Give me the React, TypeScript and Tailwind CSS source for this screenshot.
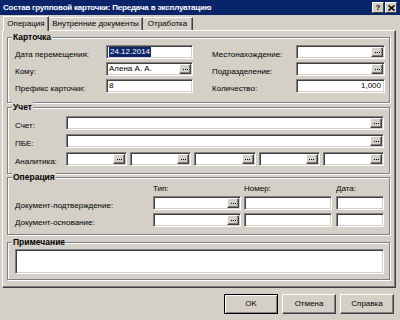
import React from "react";

const Dots = () => (
  <div className="w-[12px] h-[10px] flex-none flex items-center justify-center gap-[1px] bg-[#d4d0c8] border border-t-white border-l-white border-r-[#404040] border-b-[#404040] shadow-[inset_-1px_-1px_0_#808080]">
    <span className="w-[1px] h-[1px] bg-black" />
    <span className="w-[1px] h-[1px] bg-black" />
    <span className="w-[1px] h-[1px] bg-black" />
  </div>
);

const Field = ({
  className = "",
  dots = false,
  grow = false,
  children,
}: {
  className?: string;
  dots?: boolean;
  grow?: boolean;
  children?: React.ReactNode;
}) => (
  <div
    className={`h-[14px] ${grow ? "flex-1 min-w-0" : "flex-none"} flex items-stretch bg-white border border-t-[#808080] border-l-[#808080] border-b-white border-r-white shadow-[inset_1px_1px_0_#404040,inset_-1px_-1px_0_#d4d0c8] p-[1px] ${className}`}
  >
    <div className="flex-1 min-w-0 flex items-center text-[8px] leading-[10px] pl-[1px] pr-[2px] overflow-hidden whitespace-nowrap">
      {children}
    </div>
    {dots && <Dots />}
  </div>
);

const Group = ({
  title,
  className = "",
  children,
}: {
  title: string;
  className?: string;
  children?: React.ReactNode;
}) => (
  <div
    className={`relative w-[383px] flex-none border border-[#808080] shadow-[1px_1px_0_#fff,inset_1px_1px_0_#fff] ${className}`}
  >
    <span className="absolute left-[4px] -top-[6px] bg-[#d4d0c8] px-[1px] text-[8.5px] font-bold leading-[11px] text-black">
      {title}
    </span>
    {children}
  </div>
);

const Label = ({ className = "", children }: { className?: string; children: React.ReactNode }) => (
  <span className={`flex-none mt-[4px] leading-[11px] text-[8px] whitespace-nowrap ${className}`}>{children}</span>
);

const Button = ({ children, def = false }: { children: React.ReactNode; def?: boolean }) => (
  <div
    className={`w-[54px] h-[20px] flex items-center justify-center text-[8px] text-black ${
      def
        ? "border border-black shadow-[inset_1px_1px_0_#fff,inset_-1px_-1px_0_#808080]"
        : "border border-t-white border-l-white border-r-[#404040] border-b-[#404040] shadow-[inset_-1px_-1px_0_#808080]"
    }`}
  >
    {children}
  </div>
);

export default function App() {
  return (
    <div className="w-[400px] h-[320px] overflow-hidden bg-[#d4d0c8] font-['Liberation_Sans',Arial,sans-serif] text-black flex flex-col">
      {/* Title bar */}
      <div className="h-[15px] flex-none bg-[#0a246a] flex items-center pl-[3px] pr-[3px]">
        <span className="flex-1 text-white font-bold text-[8px] tracking-[-0.2px] leading-[15px] whitespace-nowrap">
          Состав групповой карточки: Передача в эксплуатацию
        </span>
        <div className="flex gap-[1px]">
          <div className="w-[12px] h-[11px] flex items-center justify-center bg-[#d4d0c8] border border-t-white border-l-white border-r-[#404040] border-b-[#404040] text-[8px] font-bold leading-none">
            ?
          </div>
          <div className="w-[12px] h-[11px] flex items-center justify-center bg-[#d4d0c8] border border-t-white border-l-white border-r-[#404040] border-b-[#404040]">
            <svg width="7" height="6" viewBox="0 0 7 6">
              <path d="M0.5 0.5 L6.5 5.5 M6.5 0.5 L0.5 5.5" stroke="#000" strokeWidth="1.6" />
            </svg>
          </div>
        </div>
      </div>

      {/* Tabs */}
      <div className="h-[15px] flex-none flex items-end pl-[3px] relative z-10">
        <div className="w-[46px] h-[15px] -mb-[1px] bg-[#d4d0c8] border-l border-t border-l-white border-t-white border-r border-r-[#404040] shadow-[inset_-1px_0_0_#808080] flex items-center justify-center text-[8px] leading-none pb-[1px]">
          Операция
        </div>
        <div className="w-[94px] h-[13px] border-t border-t-white border-r border-r-[#404040] shadow-[inset_-1px_0_0_#808080] flex items-center justify-center text-[8px] leading-none">
          Внутренние документы
        </div>
        <div className="w-[50px] h-[13px] border-t border-t-white border-r border-r-[#404040] shadow-[inset_-1px_0_0_#808080] flex items-center justify-center text-[8px] leading-none">
          Отработка
        </div>
      </div>

      {/* Panel */}
      <div className="ml-[2px] w-[394px] h-[258px] flex-none border border-t-white border-l-white border-r-[#404040] border-b-[#404040] shadow-[inset_-1px_-1px_0_#808080] pl-[4px] pt-[6px] flex flex-col">
        <Group title="Карточка" className="h-[66px]">
          <div className="flex flex-col gap-[3px] pl-[7px] pt-[7px]">
            <div className="flex h-[14px] items-start">
              <Label className="w-[91px]">Дата перемещения:</Label>
              <Field className="w-[87px]">
                <span className="bg-[#0a246a] text-white px-[1px]">24.12.2014</span>
              </Field>
              <Label className="ml-[19px] w-[84px]">Местонахождение:</Label>
              <Field className="w-[89px]" dots />
            </div>
            <div className="flex h-[14px] items-start">
              <Label className="w-[91px]">Кому:</Label>
              <Field className="w-[87px]" dots>
                Алена А. А.
              </Field>
              <Label className="ml-[19px] w-[84px]">Подразделение:</Label>
              <Field className="w-[89px]" dots />
            </div>
            <div className="flex h-[14px] items-start">
              <Label className="w-[91px]">Префикс карточки:</Label>
              <Field className="w-[87px]">8</Field>
              <Label className="ml-[19px] w-[84px]">Количество:</Label>
              <Field className="w-[89px]">
                <span className="ml-auto">1,000</span>
              </Field>
            </div>
          </div>
        </Group>

        <Group title="Учет" className="mt-[4px] h-[67px]">
          <div className="flex flex-col gap-[4px] pl-[7px] pt-[8px]">
            <div className="flex h-[14px] items-start">
              <Label className="w-[51px]">Счет:</Label>
              <Field className="w-[318px]" dots />
            </div>
            <div className="flex h-[14px] items-start">
              <Label className="w-[51px]">ПБЕ:</Label>
              <Field className="w-[318px]" dots />
            </div>
            <div className="flex h-[14px] items-start">
              <Label className="w-[51px]">Аналитика:</Label>
              <div className="w-[318px] flex gap-[3px]">
                <Field grow dots />
                <Field grow dots />
                <Field grow dots />
                <Field grow dots />
                <Field grow dots />
              </div>
            </div>
          </div>
        </Group>

        <Group title="Операция" className="mt-[3px] h-[58px]">
          <div className="flex flex-col pl-[7px] pt-[6px]">
            <div className="flex h-[10px] text-[8px] leading-[10px]">
              <span className="ml-[138px] w-[91px]">Тип:</span>
              <span className="w-[92px]">Номер:</span>
              <span>Дата:</span>
            </div>
            <div className="flex h-[14px] items-start mt-[2px]">
              <Label className="w-[138px]">Документ-подтверждение:</Label>
              <Field className="w-[88px]" dots />
              <Field className="ml-[3px] w-[88px]" />
              <Field className="ml-[4px] w-[48px]" />
            </div>
            <div className="flex h-[14px] items-start mt-[3px]">
              <Label className="w-[138px]">Документ-основание:</Label>
              <Field className="w-[88px]" dots />
              <Field className="ml-[3px] w-[88px]" />
              <Field className="ml-[4px] w-[48px]" />
            </div>
          </div>
        </Group>

        <Group title="Примечание" className="mt-[7px] h-[38px]">
          <div className="pl-[7px] pt-[6px]">
            <div className="w-[369px] h-[25px] bg-white border border-t-[#808080] border-l-[#808080] border-b-white border-r-white shadow-[inset_1px_1px_0_#404040,inset_-1px_-1px_0_#d4d0c8]" />
          </div>
        </Group>
      </div>

      {/* Buttons */}
      <div className="flex justify-end gap-[4px] pr-[6px] mt-[6px]">
        <Button def>OK</Button>
        <Button>Отмена</Button>
        <Button>Справка</Button>
      </div>
    </div>
  );
}
